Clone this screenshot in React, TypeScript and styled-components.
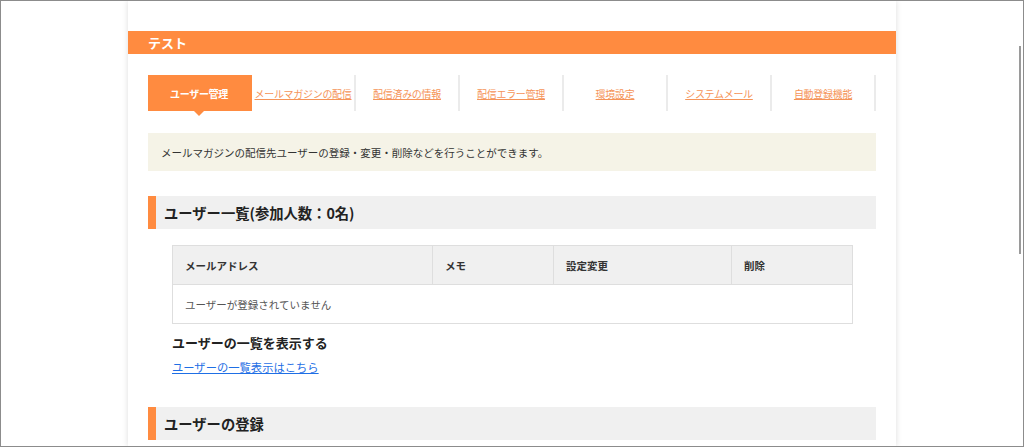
import React from "react";
import styled, { createGlobalStyle } from "styled-components";

const Global = createGlobalStyle`
  html, body { margin: 0; padding: 0; background: #fff; }
  body { font-family: "Noto Sans CJK JP", "Noto Sans", sans-serif; color: #333; }
  * { box-sizing: border-box; }
`;

const ORANGE = "#ff8b40";

const Frame = styled.div`
  position: relative;
  width: 1024px;
  height: 447px;
  border: 1px solid #8c8c8c;
  overflow: hidden;
  background: #fff;
`;

const ScrollThumb = styled.div`
  position: absolute;
  right: 2px;
  top: 45px;
  width: 2px;
  height: 208px;
  background: #9a9a9a;
`;

const Panel = styled.div`
  width: 768px;
  margin: 0 auto;
  min-height: 100%;
  padding-top: 30px;
  background: #fff;
  box-shadow: 0 0 6px rgba(0, 0, 0, 0.14);
`;

const TitleBar = styled.div`
  height: 23px;
  background: ${ORANGE};
  color: #fff;
  font-size: 13px;
  font-weight: 700;
  line-height: 23px;
  padding-left: 20px;
`;

const Content = styled.div`
  padding: 0 20px;
`;

const Tabs = styled.ul`
  display: flex;
  list-style: none;
  margin: 21px 0 0;
  padding: 0;
  height: 36px;
`;

const Tab = styled.li<{ $active?: boolean }>`
  position: relative;
  width: 104px;
  height: 36px;
  display: flex;
  align-items: center;
  justify-content: center;
  font-size: 10px;
  white-space: nowrap;
  border-right: 2px solid ${(p) => (p.$active ? ORANGE : "#ebebeb")};
  background: ${(p) => (p.$active ? ORANGE : "transparent")};
  color: ${(p) => (p.$active ? "#fff" : "#f59458")};
  font-weight: ${(p) => (p.$active ? 700 : 400)};
  text-decoration: ${(p) => (p.$active ? "none" : "underline")};
  text-underline-offset: 1px;
  letter-spacing: -0.3px;
`;

const Arrow = styled.span`
  position: absolute;
  left: 50%;
  bottom: -5px;
  margin-left: -5px;
  width: 0;
  height: 0;
  border-left: 5px solid transparent;
  border-right: 5px solid transparent;
  border-top: 5px solid ${ORANGE};
`;

const Info = styled.div`
  margin-top: 22px;
  height: 38px;
  display: flex;
  align-items: center;
  padding: 0 13px;
  background: #f5f3e7;
  font-size: 10.5px;
  color: #333;
`;

const SectionTitle = styled.h2<{ $top: number }>`
  margin: ${(p) => p.$top}px 0 0;
  height: 33px;
  display: flex;
  align-items: center;
  border-left: 8px solid ${ORANGE};
  background: #f0f0f0;
  padding-left: 8px;
  font-size: 14.3px;
  font-weight: 700;
  color: #222;
`;

const Inner = styled.div`
  padding: 16px 24px 0;
`;

const Table = styled.table`
  width: 680px;
  border-collapse: collapse;
  table-layout: fixed;
  font-size: 10.5px;
`;

const Th = styled.th<{ $w: number }>`
  width: ${(p) => p.$w}px;
  height: 39px;
  background: #f0f0f0;
  border: 1px solid #dedede;
  text-align: left;
  padding: 0 12px;
  font-weight: 700;
  color: #333;
`;

const Td = styled.td`
  height: 39px;
  border: 1px solid #dedede;
  padding: 0 12px;
  color: #555;
`;

const SubHeading = styled.h3`
  margin: 9px 0 0;
  font-size: 13px;
  font-weight: 700;
  color: #222;
  line-height: 20px;
`;

const Link = styled.a`
  display: inline-block;
  margin-top: 2px;
  font-size: 11.3px;
  color: #1f6fe5;
  text-decoration: underline;
  line-height: 18px;
`;

const tabs = [
  "ユーザー管理",
  "メールマガジンの配信",
  "配信済みの情報",
  "配信エラー管理",
  "環境設定",
  "システムメール",
  "自動登録機能",
];

export default function App() {
  return (
    <>
      <Global />
      <Frame>
        <Panel>
          <TitleBar>テスト</TitleBar>
          <Content>
            <Tabs>
              {tabs.map((t, i) => (
                <Tab key={t} $active={i === 0}>
                  {t}
                  {i === 0 && <Arrow />}
                </Tab>
              ))}
            </Tabs>
            <Info>メールマガジンの配信先ユーザーの登録・変更・削除などを行うことができます。</Info>
            <SectionTitle $top={25}>ユーザー一覧(参加人数：0名)</SectionTitle>
            <Inner>
              <Table>
                <thead>
                  <tr>
                    <Th $w={260}>メールアドレス</Th>
                    <Th $w={121}>メモ</Th>
                    <Th $w={178}>設定変更</Th>
                    <Th $w={121}>削除</Th>
                  </tr>
                </thead>
                <tbody>
                  <tr>
                    <Td colSpan={4}>ユーザーが登録されていません</Td>
                  </tr>
                </tbody>
              </Table>
              <SubHeading>ユーザーの一覧を表示する</SubHeading>
              <Link href="#">ユーザーの一覧表示はこちら</Link>
            </Inner>
            <SectionTitle $top={30}>ユーザーの登録</SectionTitle>
          </Content>
        </Panel>
        <ScrollThumb />
      </Frame>
    </>
  );
}
